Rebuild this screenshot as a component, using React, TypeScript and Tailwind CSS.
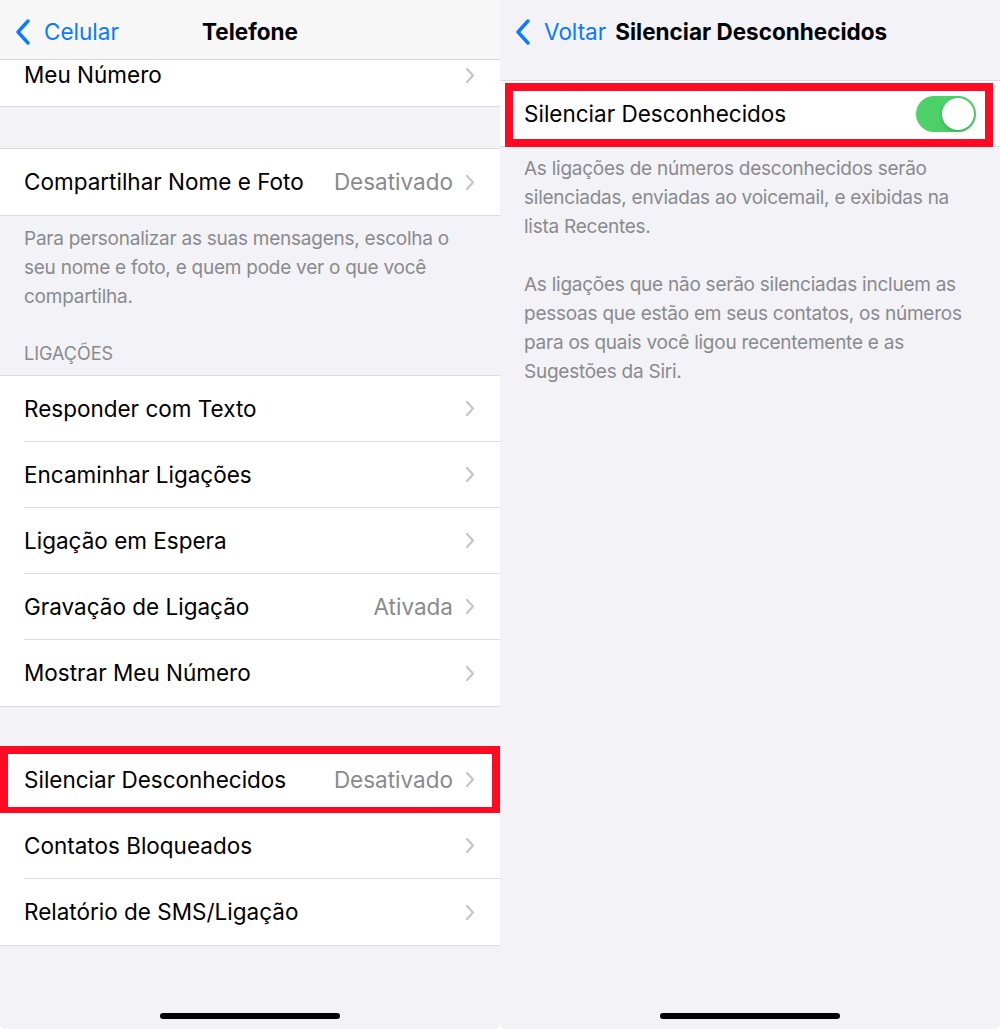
import React from "react";

const font = { fontFamily: "Inter, 'Noto Sans', sans-serif" };

function Chevron() {
  return (
    <svg width="10" height="17" viewBox="0 0 10 17" className="shrink-0">
      <path d="M2 2 L8 8.5 L2 15" fill="none" stroke="#c5c5c8" strokeWidth="2.2" strokeLinecap="round" strokeLinejoin="round" />
    </svg>
  );
}

function BackChevron() {
  return (
    <svg width="18" height="28" viewBox="0 0 18 28" className="shrink-0">
      <path d="M14 3 L4 14 L14 25" fill="none" stroke="#0a7aff" strokeWidth="3.4" strokeLinecap="round" strokeLinejoin="round" />
    </svg>
  );
}

function Row({ label, value, last, highlight }: { label: string; value?: string; last?: boolean; highlight?: boolean }) {
  return (
    <div className="relative h-[66px] pl-[24px] bg-white">
      <div className={"flex h-full items-center pr-[25px] " + (last ? "" : "border-b border-[#dcdce0]")}>
        <span className="flex-1 text-[22.5px] text-black">{label}</span>
        {value && <span className="text-[22.5px] text-[#8a8a8e] mr-[12px]">{value}</span>}
        <Chevron />
      </div>
      {highlight && (
        <div className="absolute left-0 top-[-1px] w-[500px] h-[69px] border-[8px] border-[#ff0a23]" />
      )}
    </div>
  );
}

function HomeBar() {
  return <div className="absolute bottom-[10px] left-1/2 -translate-x-1/2 w-[180px] h-[6px] rounded-full bg-black" />;
}

export default function App() {
  return (
    <div className="flex w-[1000px] h-[1029px] bg-white" style={font}>
      {/* Left panel */}
      <div className="relative w-[500px] h-[1029px] bg-[#f2f2f7] rounded-b-[6px] overflow-hidden">
        <div className="relative h-[60px] bg-[#f7f7f8] border-b border-[#d6d6da] flex items-center">
          <div className="absolute left-[14px] top-[15px] flex items-center">
            <BackChevron />
            <span className="ml-[12px] text-[22.5px] text-[#0a7aff]">Celular</span>
          </div>
          <div className="w-full text-center text-[22.5px] font-bold text-black mt-[4px]">Telefone</div>
        </div>
        <div className="h-[47px] bg-white border-b border-[#dcdce0] pl-[24px] pr-[25px] pb-[16px] flex items-center">
          <span className="flex-1 text-[22.5px] text-black">Meu Número</span>
          <Chevron />
        </div>
        <div className="h-[41px]" />
        <div className="border-t border-b border-[#dcdce0]">
          <Row label="Compartilhar Nome e Foto" value="Desativado" last />
        </div>
        <div className="pt-[8px] px-[24px] text-[19px] leading-[29px] text-[#8a8a8e] tracking-[-0.25px]">
          Para personalizar as suas mensagens, escolha o seu nome e foto, e quem pode ver o que você compartilha.
        </div>
        <div className="pt-[31px] pb-[9px] px-[24px] text-[18px] leading-[24px] text-[#8a8a8e]">LIGAÇÕES</div>
        <div className="border-t border-b border-[#dcdce0]">
          <Row label="Responder com Texto" />
          <Row label="Encaminhar Ligações" />
          <Row label="Ligação em Espera" />
          <Row label="Gravação de Ligação" value="Ativada" />
          <Row label="Mostrar Meu Número" last />
        </div>
        <div className="h-[39px]" />
        <div className="border-t border-b border-[#dcdce0]">
          <Row label="Silenciar Desconhecidos" value="Desativado" highlight />
          <Row label="Contatos Bloqueados" />
          <Row label="Relatório de SMS/Ligação" last />
        </div>
        <HomeBar />
      </div>

      {/* Right panel */}
      <div className="relative w-[500px] h-[1029px] bg-[#f2f2f7] rounded-b-[6px] overflow-hidden">
        <div className="h-[80px] relative">
          <div className="absolute left-[14px] top-[15px] flex items-center">
            <BackChevron />
            <span className="ml-[12px] text-[22.5px] text-[#0a7aff]">Voltar</span>
            <span className="ml-[9px] text-[22.5px] font-bold text-black">Silenciar Desconhecidos</span>
          </div>
        </div>
        <div className="relative h-[67px] bg-white border-t border-b border-[#dcdce0] flex items-center pl-[24px] pr-[24px]">
          <span className="flex-1 text-[22.5px] text-black">Silenciar Desconhecidos</span>
          <div className="w-[60px] h-[36px] rounded-full bg-[#4cd068] flex items-center justify-end pr-[2px]">
            <div className="w-[32px] h-[32px] rounded-full bg-white shadow-[0_2px_4px_rgba(0,0,0,0.18)]" />
          </div>
          <div className="absolute left-[5px] top-[2px] w-[488px] h-[64px] border-[8px] border-[#ff0a23]" />
        </div>
        <div className="pt-[7px] px-[24px] text-[19px] leading-[29px] text-[#8a8a8e] tracking-[-0.25px]">
          <p>As ligações de números desconhecidos serão silenciadas, enviadas ao voicemail, e exibidas na lista Recentes.</p>
          <p className="mt-[29px]">As ligações que não serão silenciadas incluem as pessoas que estão em seus contatos, os números para os quais você ligou recentemente e as Sugestões da Siri.</p>
        </div>
        <HomeBar />
      </div>
    </div>
  );
}
